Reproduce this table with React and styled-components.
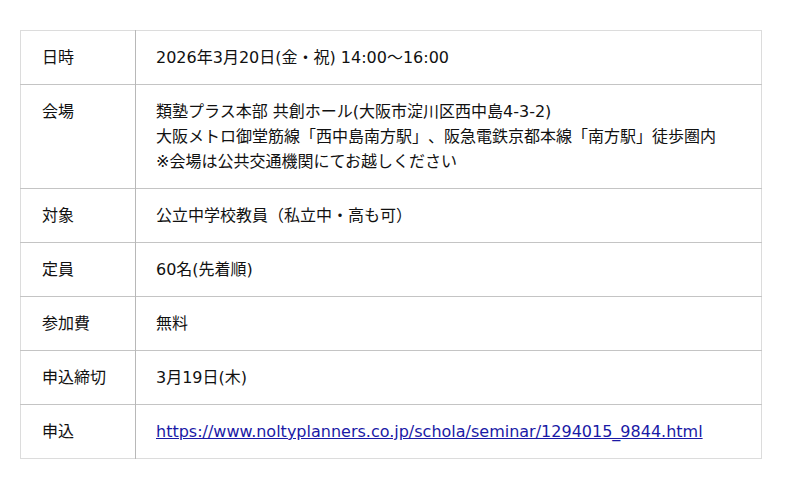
import React from 'react'
import styled, { createGlobalStyle } from 'styled-components'

const GlobalStyle = createGlobalStyle`
  html, body {
    margin: 0;
    padding: 0;
    background: #fff;
  }
  body {
    font-family: "DejaVu Sans", "Noto Sans CJK JP", sans-serif;
    color: #111;
    text-spacing-trim: space-all;
  }
`

const Page = styled.div`
  padding: 30px 38px 30px 20px;
`

const Table = styled.table`
  width: 742px;
  border-collapse: collapse;
  border: 1px solid #dcdcdc;
  font-size: 16px;
  line-height: 25px;
`

const Row = styled.tr`
  border-bottom: 1px solid #c4c4c4;

  &:last-child {
    border-bottom: 1px solid #dcdcdc;
  }
`

const Label = styled.th`
  width: 73px;
  padding: 14px 20px 14px 21px;
  text-align: left;
  vertical-align: top;
  font-weight: normal;
  border-right: 1px solid #b8b8b8;
`

const Value = styled.td`
  padding: 14px 20px;
  vertical-align: top;
`

const Line = styled.div``

const UrlLink = styled.a`
  color: #1a1aa6;
  text-decoration: underline;
`

const rows = [
  { label: '日時', lines: ['2026年3月20日(金・祝) 14:00〜16:00'] },
  {
    label: '会場',
    lines: [
      '類塾プラス本部 共創ホール(大阪市淀川区西中島4-3-2)',
      '大阪メトロ御堂筋線「西中島南方駅」、阪急電鉄京都本線「南方駅」徒歩圏内',
      '※会場は公共交通機関にてお越しください',
    ],
  },
  { label: '対象', lines: ['公立中学校教員（私立中・高も可）'] },
  { label: '定員', lines: ['60名(先着順)'] },
  { label: '参加費', lines: ['無料'] },
  { label: '申込締切', lines: ['3月19日(木)'] },
]

const url = 'https://www.noltyplanners.co.jp/schola/seminar/1294015_9844.html'

const App = () => (
  <>
    <GlobalStyle />
    <Page>
      <Table>
        <tbody>
          {rows.map((r) => (
            <Row key={r.label}>
              <Label>{r.label}</Label>
              <Value>
                {r.lines.map((l) => (
                  <Line key={l}>{l}</Line>
                ))}
              </Value>
            </Row>
          ))}
          <Row>
            <Label>申込</Label>
            <Value>
              <UrlLink href={url}>{url}</UrlLink>
            </Value>
          </Row>
        </tbody>
      </Table>
    </Page>
  </>
)

export default App
